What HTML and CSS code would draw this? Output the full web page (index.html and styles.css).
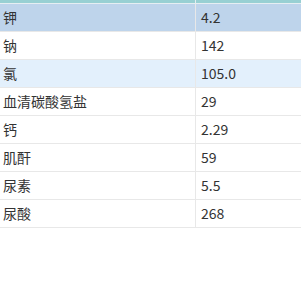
FILE: index.html
```html
<!DOCTYPE html>
<html>
<head>
<meta charset="utf-8">
<link rel="stylesheet" href="styles.css">
</head>
<body>
<div class="grid">
  <div class="head"><div class="hc c1"></div><div class="hc c2"></div></div>
  <div class="row sel"><div class="cell c1">钾</div><div class="cell c2">4.2</div></div>
  <div class="row"><div class="cell c1">钠</div><div class="cell c2">142</div></div>
  <div class="row hover"><div class="cell c1">氯</div><div class="cell c2">105.0</div></div>
  <div class="row"><div class="cell c1">血清碳酸氢盐</div><div class="cell c2">29</div></div>
  <div class="row"><div class="cell c1">钙</div><div class="cell c2">2.29</div></div>
  <div class="row"><div class="cell c1">肌酐</div><div class="cell c2">59</div></div>
  <div class="row"><div class="cell c1">尿素</div><div class="cell c2">5.5</div></div>
  <div class="row"><div class="cell c1">尿酸</div><div class="cell c2">268</div></div>
</div>
</body>
</html>
```
FILE: styles.css
```css
html, body {
  margin: 0;
  padding: 0;
  background: #ffffff;
}
.grid {
  width: 301px;
  font-family: "Noto Sans CJK SC", "Microsoft YaHei", sans-serif;
  font-size: 14px;
  color: #333333;
}
.head {
  display: flex;
  height: 3px;
  background: #98d0d3;
  border-bottom: 1px solid #e6eef2;
}
.hc.c1 {
  width: 195px;
  border-right: 1px solid #e4eef0;
}
.row {
  display: flex;
  height: 27px;
  border-bottom: 1px solid #e8e8e8;
}
.row.sel { background: #bed4eb; }
.row.hover { background: #e3f0fc; }
.cell {
  display: flex;
  align-items: center;
  line-height: 27px;
  white-space: nowrap;
}
.cell.c1 {
  width: 192px;
  padding-left: 3px;
  border-right: 1px solid #e8e8e8;
}
.cell.c2 {
  flex: 1;
  padding-left: 5px;
}
```
